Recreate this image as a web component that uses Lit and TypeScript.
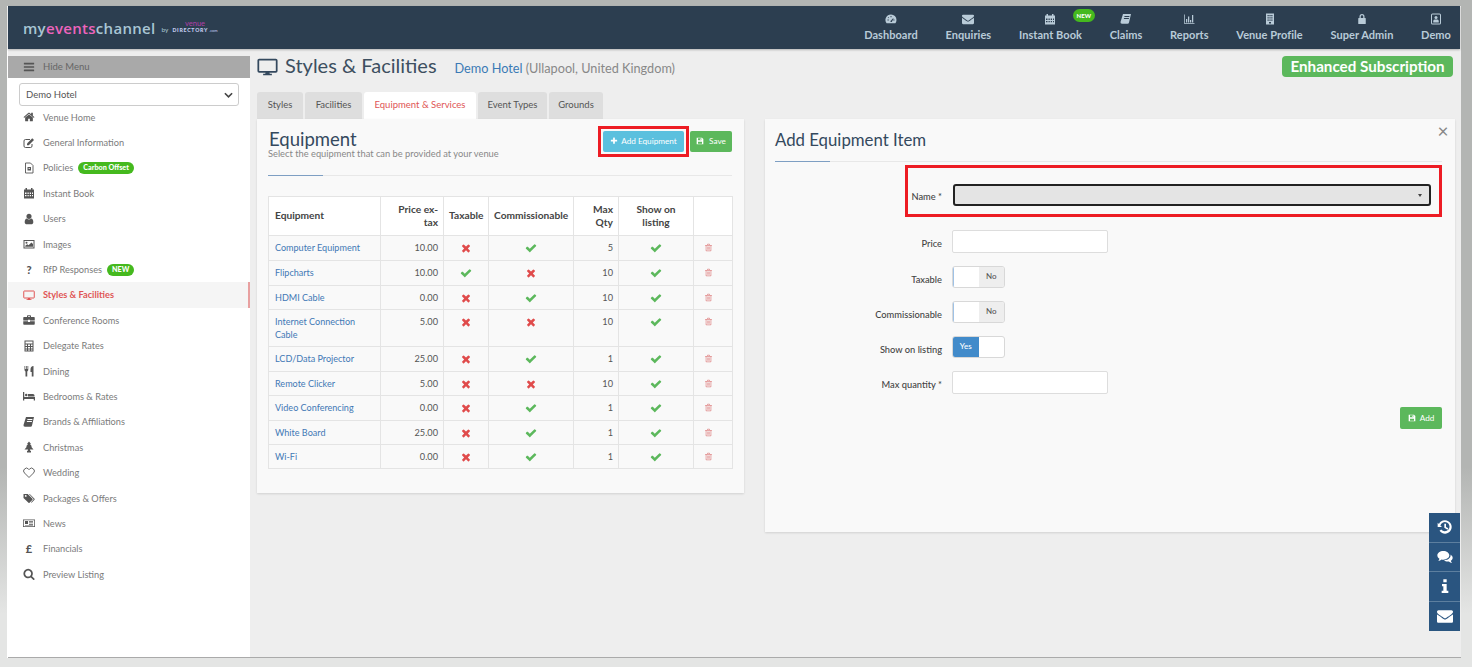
import { LitElement, html, css, svg } from "lit";
import { customElement } from "lit/decorators.js";

const fa = (d: string) => svg`<svg viewBox="0 0 1792 1792" fill="currentColor"><path d=${d}></path></svg>`;
const ic = (body: unknown) => svg`<svg viewBox="0 0 24 24" fill="currentColor">${body}</svg>`;

const ICONS: Record<string, unknown> = {
  check: fa("M1671 566q0 40-28 68l-724 724-136 136q-28 28-68 28t-68-28l-136-136-362-362q-28-28-28-68t28-68l136-136q28-28 68-28t68 28l294 295 656-657q28-28 68-28t68 28l136 136q28 28 28 68z"),
  times: fa("M1490 1322q0 40-28 68l-136 136q-28 28-68 28t-68-28l-294-294-294 294q-28 28-68 28t-68-28l-136-136q-28-28-28-68t28-68l294-294-294-294q-28-28-28-68t28-68l136-136q28-28 68-28t68 28l294 294 294-294q28-28 68-28t68 28l136 136q28 28 28 68t-28 68l-294 294 294 294q28 28 28 68z"),
  search: fa("M1216 832q0-185-131.500-316.500t-316.500-131.500-316.500 131.500-131.500 316.500 131.500 316.500 316.500 131.500 316.500-131.500 131.500-316.500zm512 832q0 52-38 90t-90 38q-54 0-90-38l-343-342q-179 124-399 124-143 0-273.500-55.500t-225-150-150-225-55.500-273.500 55.500-273.500 150-225 225-150 273.500-55.500 273.500 55.500 225 150 150 225 55.500 273.500q0 220-124 399l343 343q37 37 37 90z"),
  envelope: fa("M1792 710v794q0 66-47 113t-113 47h-1472q-66 0-113-47t-47-113v-794q44 49 101 87 362 246 497 345 57 42 92.500 65.500t94.500 48 110 24.500h2q51 0 110-24.500t94.500-48 92.500-65.500q170-123 498-345 57-39 100-87zm0-294q0 79-49 151t-122 123q-376 261-468 325-10 7-42.500 30.500t-54 38-52 32.500-57.500 27-50 9h-2q-23 0-50-9t-57.500-27-52-32.500-54-38-42.500-30.500q-91-64-262-182.500t-205-142.500q-62-42-117-115.500t-55-136.500q0-78 41.500-130t118.500-52h1472q65 0 112.500 47t47.500 113z"),
  home: fa("M1472 992v480q0 26-19 45t-45 19h-384v-384h-256v384h-384q-26 0-45-19t-19-45v-480q0-1 .5-3t.5-3l575-474 575 474q1 2 1 6zm223-69l-62 74q-8 9-21 11h-3q-13 0-21-7l-692-577-692 577q-12 8-24 7-13-2-21-11l-62-74q-8-10-7-23.500t11-21.500l719-599q32-26 76-26t76 26l244 204v-195q0-14 9-23t23-9h192q14 0 23 9t9 23v408l219 182q10 8 11 21.500t-7 23.500z"),
  user: fa("M1536 1399q0 109-62.500 187t-150.500 78h-854q-88 0-150.500-78t-62.500-187q0-85 8.500-160.500t31.500-152 58.500-131 94-89 134.500-34.500q131 128 313 128t313-128q76 0 134.500 34.500t94 89 58.500 131 31.500 152 8.500 160.500zm-256-887q0 159-112.500 271.500t-271.500 112.500-271.500-112.500-112.500-271.500 112.500-271.500 271.500-112.500 271.500 112.500 112.500 271.500z"),
  bars: fa("M1664 1344v128q0 26-19 45t-45 19h-1408q-26 0-45-19t-19-45v-128q0-26 19-45t45-19h1408q26 0 45 19t19 45zm0-512v128q0 26-19 45t-45 19h-1408q-26 0-45-19t-19-45v-128q0-26 19-45t45-19h1408q26 0 45 19t19 45zm0-512v128q0 26-19 45t-45 19h-1408q-26 0-45-19t-19-45v-128q0-26 19-45t45-19h1408q26 0 45 19t19 45z"),
  plus: fa("M1600 736v192q0 40-28 68t-68 28h-416v416q0 40-28 68t-68 28h-192q-40 0-68-28t-28-68v-416h-416q-40 0-68-28t-28-68v-192q0-40 28-68t68-28h416v-416q0-40 28-68t68-28h192q40 0 68 28t28 68v416h416q40 0 68 28t28 68z"),
  desktop: ic(svg`<path fill="none" stroke="currentColor" stroke-width="2" stroke-linejoin="round" d="M2.5 4h19a1 1 0 0 1 1 1v12a1 1 0 0 1-1 1h-19a1 1 0 0 1-1-1V5a1 1 0 0 1 1-1z"/><path d="M10 18h4l.6 2.4H17V22H7v-1.600h2.400z"/>`),
  edit: ic(svg`<path fill="none" stroke="currentColor" stroke-width="2" d="M18 14v4a3 3 0 0 1-3 3H5a3 3 0 0 1-3-3V8a3 3 0 0 1 3-3h9"/><path d="M8 13L18.500 2.500l3.500 3.500L11.500 16.500H8z"/>`),
  file: ic(svg`<path fill="none" stroke="currentColor" stroke-width="1.800" d="M5 2h10l5 5v15H5z"/><path d="M9 10h7v7H9zm2 2v1.500h3V12z"/>`),
  calendar: ic(svg`<path fill-rule="evenodd" d="M2 5h3V2h3v3h8V2h3v3h3v18H2zm2 6v3h3v-3zm5 0v3h2.500v-3zm4.500 0v3H16v-3zm4.500 0v3h2v-3zM4 16v2.500h3V16zm5 0v2.500h2.500V16zm4.500 0v2.500H16V16zm4.500 0v2.500h2V16z"/>`),
  image: ic(svg`<path fill-rule="evenodd" d="M1 4h22v17H1zm2 2v13h18V6z"/><circle cx="7" cy="9.500" r="2"/><path d="M4.500 17.500v-2l4-3 2.500 2 6-5.500 3 3v5.500z"/>`),
  monitor: ic(svg`<path fill="none" stroke="currentColor" stroke-width="2" d="M2.500 4h19a1 1 0 0 1 1 1v12a1 1 0 0 1-1 1h-19a1 1 0 0 1-1-1V5a1 1 0 0 1 1-1z"/><path d="M10 18h4l.6 2.400H17V22H7v-1.600h2.400z"/>`),
  briefcase: ic(svg`<path fill-rule="evenodd" d="M8 6V4a1.500 1.500 0 0 1 1.500-1.500h5A1.500 1.500 0 0 1 16 4v2h6a1.500 1.500 0 0 1 1.500 1.500V13H14v-1.500h-4V13H.5V7.500A1.500 1.500 0 0 1 2 6zm2-1.500V6h4V4.500z"/><path d="M.5 14.500H10V16h4v-1.500h9.500V20a1.500 1.500 0 0 1-1.500 1.500H2A1.500 1.500 0 0 1 .5 20z"/>`),
  calc: ic(svg`<path fill-rule="evenodd" d="M3 1h18v22H3zm2 2v4h14V3zm0 6v3h3V9zm5 0v3h4V9zm6 0v3h3V9zm-11 5v3h3v-3zm5 0v3h4v-3zm6 0v3h3v-3zM5 19v2h3v-2zm5 0v2h4v-2zm6 0v2h3v-2z"/>`),
  cutlery: ic(svg`<path d="M3 2h1.500v6H6V2h1.500v6H9V2h1.500v8a3 3 0 0 1-2 2.800V23H5V12.800A3 3 0 0 1 3 10zM15 9c0-4 2-7 6-7v21h-3.500v-9H15z"/>`),
  bed: ic(svg`<path d="M0 4h2.500v10H24v7h-2.500v-3h-19v3H0z"/><circle cx="6.500" cy="10" r="2.500"/><path d="M10 8h10a3 3 0 0 1 3 3v2H10z"/>`),
  book: ic(svg`<path fill-rule="evenodd" d="M6 2h16l-4 17a3 3 0 0 1-3 2.500H4a3 3 0 0 1-3-3.500zm3 4l-.4 2h10l.4-2zm-1 4l-.4 2h10l.4-2z"/>`),
  tree: ic(svg`<path d="M12 1l4 5h-2l4 5h-2l5 6h-7v2.500h2V23H8v-3.500h2V17H3l5-6H6l4-5H8z"/>`),
  heart: ic(svg`<path fill="none" stroke="currentColor" stroke-width="1.800" stroke-linejoin="round" d="M12 21L3 12a5.500 5.500 0 0 1 0-8 5.500 5.500 0 0 1 8 0l1 1 1-1a5.500 5.500 0 0 1 8 0 5.500 5.500 0 0 1 0 8z"/>`),
  tags: ic(svg`<path fill-rule="evenodd" d="M1 4h8.500L19 13.500a1.500 1.500 0 0 1 0 2l-6 6a1.500 1.500 0 0 1-2 0L1 12zm4.500 2a1.800 1.800 0 1 0 0 3.600 1.800 1.800 0 0 0 0-3.600z"/><path d="M12 4h1.500L23 13.500a1.500 1.500 0 0 1 0 2l-6 6-1-1 5.500-6z"/>`),
  news: ic(svg`<path fill-rule="evenodd" d="M0 5h24v15H0zm1.500 1.500v12h21v-12z"/><path d="M4 8h6v6H4zM12 8h8v1.500h-8zM12 11h8v1.500h-8zM12 14h8v1.500h-8zM4 16h16v1H4z"/>`),
  dashboard: ic(svg`<path fill-rule="evenodd" d="M12 3a11 11 0 0 1 11 11c0 2.500-.8 4.800-2.200 6.700H3.200A11 11 0 0 1 12 3zM5 13v2h2.500v-2zm5.800 3.500a1.800 1.800 0 0 0 2.800 1.400l3.500-6.900-1-.5-4 4.500a1.800 1.800 0 0 0-1.300 1.500zM11 6v2.500h2V6zM6.500 8l-1 1 1.500 1.500 1-1zm10 5v2H19v-2z"/>`),
  chart: ic(svg`<path d="M2 3h1.500v17H23v1.500H2z"/><path d="M6 12h2.500v7H6zM10 7h2.500v12H10zM14 14h2.500v5H14zM18 4h2.500v15H18z"/>`),
  building: ic(svg`<path fill-rule="evenodd" d="M4 1h16v22H4zm3 3v2.500h2.500V4zm3.800 0v2.500h2.500V4zm3.700 0v2.500H17V4zM7 8.500V11h2.500V8.500zm3.800 0V11h2.500V8.500zm3.700 0V11H17V8.500zM7 13v2.500h2.500V13zm3.800 0v2.500h2.500V13zm3.700 0v2.500H17V13zM10 18v3h4v-3z"/>`),
  lock: ic(svg`<path fill-rule="evenodd" d="M7 10V7a5 5 0 0 1 10 0v3h1.500a1 1 0 0 1 1 1v10a1 1 0 0 1-1 1h-13a1 1 0 0 1-1-1V11a1 1 0 0 1 1-1zm2.500 0h5V7a2.500 2.500 0 0 0-5 0z"/>`),
  portrait: ic(svg`<path fill-rule="evenodd" d="M5 1h14a3 3 0 0 1 3 3v16a3 3 0 0 1-3 3H5a3 3 0 0 1-3-3V4a3 3 0 0 1 3-3zm0 2a1 1 0 0 0-1 1v16a1 1 0 0 0 1 1h14a1 1 0 0 0 1-1V4a1 1 0 0 0-1-1z"/><circle cx="12" cy="9" r="3"/><path d="M6.500 19v-3a3 3 0 0 1 3-3h5a3 3 0 0 1 3 3v3z"/>`),
  trash: ic(svg`<path fill-rule="evenodd" d="M8.500 5V3.500A1.500 1.500 0 0 1 10 2h4a1.500 1.500 0 0 1 1.500 1.500V5H21v2h-1.500v13a2 2 0 0 1-2 2h-11a2 2 0 0 1-2-2V7H3V5zm2-1v1h3V4zM6.500 7v13h11V7zm2 2h1.500v9H8.500zm2.800 0h1.500v9h-1.500zm2.700 0h1.500v9H14z"/>`),
  save: ic(svg`<path fill-rule="evenodd" d="M2 2h16l4 4v16H2zm4 2v6h10V4zm7 1h2v4h-2zM6 14v6h12v-6z"/>`),
  history: ic(svg`<path d="M12 2a10 10 0 1 1-8.200 15.700l2.500-1.800A7 7 0 1 0 5 9.600L7.500 12H1V5.500l1.900 1.900A10 10 0 0 1 12 2z"/><path d="M11 7h2.500v5l3.500 2-1.200 2-4.800-2.800z"/>`),
  comments: ic(svg`<path d="M9.500 3c5 0 9 2.900 9 6.500S14.500 16 9.500 16c-.9 0-1.800-.1-2.600-.3C5.500 17 3.800 17.800 2 18c.9-1 1.500-2 1.700-3.200C1.600 13.600.500 11.700.500 9.500.500 5.900 4.500 3 9.500 3z"/><path d="M20 8.300c2.100 1.100 3.500 2.900 3.500 5 0 1.800-1.100 3.500-2.800 4.500.2 1 .8 2 1.800 3.200-1.900-.2-3.500-1-4.700-2.400-.6.100-1.200.2-1.800.2-2.200 0-4.200-.7-5.600-1.900 5.500.2 10-3 10-7.400 0-.4 0-.9-.4-1.200z"/>`),
  info: ic(svg`<path d="M9.500 2h5v4.500h-5zM7.500 9h7v10h2.500v3.500H7V19h2.500v-6.500h-2z"/>`),
};
const icon = (n: string) => ICONS[n];

const HEADER = [
  ["dashboard", "Dashboard"], ["envelope", "Enquiries"], ["calendar", "Instant Book", "NEW"], ["book", "Claims"],
  ["chart", "Reports"], ["building", "Venue Profile"], ["lock", "Super Admin"], ["portrait", "Demo"],
];
const MENU: [string, string, string?][] = [
  ["home", "Venue Home"], ["edit", "General Information"], ["file", "Policies", "Carbon Offset"], ["calendar", "Instant Book"],
  ["user", "Users"], ["image", "Images"], ["?", "RfP Responses", "NEW"], ["monitor", "Styles & Facilities"],
  ["briefcase", "Conference Rooms"], ["calc", "Delegate Rates"], ["cutlery", "Dining"], ["bed", "Bedrooms & Rates"],
  ["book", "Brands & Affiliations"], ["tree", "Christmas"], ["heart", "Wedding"], ["tags", "Packages & Offers"],
  ["news", "News"], ["£", "Financials"], ["search", "Preview Listing"],
];
const ROWS: [string, string, boolean, boolean, string, number][] = [
  ["Computer Equipment", "10.00", false, true, "5", 25],
  ["Flipcharts", "10.00", true, false, "10", 25],
  ["HDMI Cable", "0.00", false, true, "10", 24],
  ["Internet Connection Cable", "5.00", false, false, "10", 37],
  ["LCD/Data Projector", "25.00", false, true, "1", 25],
  ["Remote Clicker", "5.00", false, false, "10", 24],
  ["Video Conferencing", "0.00", false, true, "1", 25],
  ["White Board", "25.00", false, true, "1", 24],
  ["Wi-Fi", "0.00", false, true, "1", 24],
];

@customElement("app-root")
export class AppRoot extends LitElement {
  static styles = css`
    :host { display: block; height: 667px; overflow: hidden; font-family: "Lato", "Noto Sans", sans-serif; color: #555; }
    * { box-sizing: border-box; }
    svg { display: block; width: 100%; height: 100%; }
    .shell { height: 667px; padding: 6px 11px 9px 8px; background: linear-gradient(#b3b5b3 0 70%, #e4e5e4 92%); }
    .frame { height: 652px; background: #eee; display: flex; flex-direction: column; border-bottom: 1px solid #aaa; position: relative; box-shadow: -1px 0 0 #fff; }

    header { height: 43px; flex: none; margin-right: 1px; background: #2c3e50; display: flex; align-items: center; justify-content: space-between; padding: 0 9px 0 15px; box-shadow: 0 1px 2px rgba(0,0,0,.25); }
    .logo { display: flex; align-items: center; color: #a9c6d4; }
    .logo-main { font-size: 15px; letter-spacing: .3px; font-family: "Open Sans", sans-serif; font-weight: 600; }
    .logo-main b { font-weight: 600; color: #ee64bd; }
    .logo-by { font-size: 6.500px; margin: 4px 4px 0 6px; }
    .logo-dir { display: flex; flex-direction: column; align-items: center; line-height: 1; margin-top: -1px; }
    .logo-venue { font-size: 7.500px; color: #b23fa8; line-height: 7px; }
    .logo-d { font-size: 5.200px; font-weight: 900; letter-spacing: .75px; color: #c4cdf0; line-height: 6px; }
    .logo-d i { font-style: normal; font-weight: 400; font-size: 4px; letter-spacing: 0; margin-left: 1px; }
    .topnav { display: flex; gap: 27.700px; height: 100%; }
    .topitem { position: relative; display: flex; flex-direction: column; align-items: center; justify-content: flex-end; padding-bottom: 8px; color: #b9cbd8; font-size: 11px; font-weight: 700; line-height: 13px; letter-spacing: .05px; }
    .topitem .ti { width: 12px; height: 12px; margin-bottom: 3px; }
    .topnew { position: absolute; top: 3px; left: 54px; width: 22px; height: 13px; border-radius: 7px; background: #45b91e; color: #fff; font-size: 6px; font-weight: 900; display: flex; align-items: center; justify-content: center; }

    .body { flex: 1; display: flex; padding-top: 7px; min-height: 0; }
    aside { width: 242px; flex: none; background: #fff; }
    .hide { height: 22px; background: #a9a9a9; display: flex; align-items: center; padding: 0 0 2px 15px; color: #666; font-size: 9.500px; gap: 8px; }
    .hide .mi { width: 12px; height: 12px; color: #555; margin-top: 2px; }
    .venue-sel { margin: 5px 11px 0; height: 23px; border: 1px solid #ccc; border-radius: 3px; background: #fff; display: flex; align-items: center; justify-content: space-between; padding: 0 5px 0 6px; color: #555; font-size: 9.500px; }
    .venue-sel svg { width: 9px; height: 6px; }
    ul { list-style: none; margin: -1.500px 0 0; padding: 0; }
    li { height: 25.400px; display: flex; align-items: center; padding-left: 14px; color: #7b7b7b; font-size: 9.200px; }
    li .mi { width: 14px; height: 12px; flex: none; color: #555; margin-right: 7px; display: flex; align-items: center; justify-content: center; font-size: 11px; font-weight: 900; }
    li.active { background: #f5f5f5; color: #e05555; font-weight: 700; box-shadow: inset -2px 0 0 #e8a0a0; }
    li.active .mi { color: #e05555; }
    .pill { margin-left: 5px; background: #45b91e; color: #fff; font-size: 7.200px; font-weight: 900; border-radius: 7px; height: 12px; padding: 0 5px; display: flex; align-items: center; }

    main { flex: 1; min-width: 0; padding-left: 7px; }
    .titlebar { height: 36px; display: flex; align-items: flex-start; padding-right: 8px; }
    .titlebar .big { width: 21px; height: 21px; color: #34495e; margin-right: 7px; }
    h1 { margin: -1px 0 0; font-size: 20px; font-weight: 400; color: #3d4f60; line-height: 21px; }
    .hotel { margin: 5px 0 0 18px; font-size: 12.700px; color: #888; line-height: 14px; }
    .hotel a { color: #3b7ab5; }
    .sub-badge { margin-left: auto; background: #5cb85c; color: #fff; font-weight: 700; font-size: 15.200px; border-radius: 4px; height: 21px; width: 171px; padding-bottom: 2px; display: flex; align-items: center; justify-content: center; }

    .tabs { display: flex; height: 27px; gap: 2px; }
    .tab { background: #dedede; color: #555; font-size: 9.500px; display: flex; align-items: center; justify-content: center; border-radius: 3px 3px 0 0; padding-bottom: 2px; }
    .tab.on { background: #fff; color: #e05555; }

    .panels { display: grid; grid-template-columns: 487px 690px; column-gap: 21px; align-items: start; }
    .panel { background: #f9f9f9; box-shadow: 0 1px 2px rgba(0,0,0,.12); position: relative; }
    .left { height: 374px; padding: 11px 12px 0 11px; }
    .right { height: 413px; padding: 9px 13px 0 10px; }
    .phead { display: flex; justify-content: space-between; align-items: flex-start; height: 45px; }
    h2 { margin: 0 0 0 1px; font-size: 18.500px; font-weight: 400; color: #34495e; line-height: 19px; }
    .hint { font-size: 9.300px; color: #888; line-height: 10px; }
    .btns { display: flex; gap: 6px; margin-top: 1px; }
    .btn { position: relative; height: 21px; border-radius: 2px; color: #fff; font-size: 8.200px; display: flex; align-items: center; justify-content: center; gap: 3px; background: #5cb85c; }
    .btn .bi { width: 8px; height: 8px; }
    .btn.info { width: 81px; background: #5bc0de; padding-bottom: 1px; }
    .btn.save { width: 42px; gap: 5px; padding-bottom: 1px; }
    .btn.add { width: 42px; height: 22px; gap: 4px; margin: 0 0 0 auto; }
    .mark { position: absolute; border: 3px solid #ed1c24; pointer-events: none; }
    .btn .mark { inset: -5px; }
    .rule { height: 1px; background: linear-gradient(90deg, #7e9fc3 0 55px, #e8e8e8 55px); }
    .left .rule { margin-bottom: 20px; }

    table { width: 464px; border-collapse: collapse; table-layout: fixed; font-size: 9.050px; }
    th, td { border: 1px solid #e4e4e4; padding: 0 5px; }
    th.l, td:first-child { padding-left: 6px; }
    th { height: 39px; background: #fff; color: #444; font-weight: 700; font-size: 10.200px; line-height: 13.500px; text-align: center; }
    td { color: #555; vertical-align: top; padding-top: 5px; line-height: 13px; background: #f9f9f9; }
    th.l { text-align: left; } th.r, td.r { text-align: right; }
    td.r { font-size: 9.200px; }
    td a { color: #3f78b5; }
    td .st { width: 12px; height: 12px; margin: 1px auto 0; }
    td .st.ok { color: #5cb85c; } td .st.no { color: #e04b4b; }
    td .tr { width: 9px; height: 9px; margin: 2px 0 0 5px; color: #e08a8a; }

    .rhead { height: 33px; }
    .rhead h3 { margin: 0; padding-top: 1px; font-size: 16.800px; font-weight: 400; color: #34495e; line-height: 22px; }
    .close { position: absolute; top: 6px; right: 6px; width: 12px; height: 12px; font-size: 19px; line-height: 12px; color: #888; text-align: center; }
    form { display: flex; flex-direction: column; gap: 13px; padding-top: 22px; }
    .row { position: relative; display: grid; grid-template-columns: 167px auto; column-gap: 10px; align-items: center; font-size: 9.300px; color: #444; font-weight: 500; }
    .row label { text-align: right; padding-top: 4px; }
    .row.name label { padding-top: 2px; }
    .row .mark { left: 130px; right: 0; top: -19px; bottom: -11px; }
    .row.name { margin-bottom: 11px; }
    .nsel { height: 22px; width: 478px; background: #e4e4e4; border: 2px solid #222; border-radius: 3px; display: flex; align-items: center; justify-content: flex-end; padding-right: 7px; margin-left: 1px; }
    .nsel i { border: 2.500px solid transparent; border-top: 3px solid #444; border-bottom: 0; }
    .inp { width: 156px; height: 23px; background: #fff; border: 1px solid #ddd; border-radius: 2px; }
    .tgl { width: 53px; height: 22px; background: #fff; border: 1px solid #d8d8d8; border-radius: 3px; display: grid; grid-template-columns: 1fr 1fr; overflow: hidden; font-size: 8px; }
    .tgl span { display: flex; align-items: center; justify-content: center; padding-bottom: 2px; }
    .tgl .off { background: #eee; color: #555; }
    .tgl .yes { background: #428bca; color: #fff; }
    .tgl .blank.edge { box-shadow: inset 1px 0 0 #9fc2e6; }

    .side { position: absolute; right: 1px; top: 507px; width: 31px; display: flex; flex-direction: column; }
    .side div { height: 29.500px; background: #2a5580; color: #fff; display: flex; align-items: center; justify-content: center; border-bottom: 1px solid #5d7f9f; }
    .side div:last-child { border-bottom: 0; }
    .side span { width: 16px; height: 16px; }
  `;

  render() {
    return html`<div class="shell"><div class="frame">
      <header>
        <div class="logo">
          <span class="logo-main">my<b>events</b>channel</span>
          <span class="logo-by">by</span>
          <span class="logo-dir"><span class="logo-venue">venue</span><span class="logo-d">DIRECTORY<i>.com</i></span></span>
        </div>
        <nav class="topnav">
          ${HEADER.map(([i, t, n]) => html`<div class="topitem"><span class="ti">${icon(i)}</span>${t}${n ? html`<span class="topnew">${n}</span>` : ""}</div>`)}
        </nav>
      </header>
      <div class="body">
        <aside>
          <div class="hide"><span class="mi">${icon("bars")}</span>Hide Menu</div>
          <div class="venue-sel">Demo Hotel
            <svg viewBox="0 0 10 6"><path d="M1 1l4 4 4-4" fill="none" stroke="#444" stroke-width="1.800"/></svg>
          </div>
          <ul>
            ${MENU.map(([i, t, p]) => html`<li class=${t === "Styles & Facilities" ? "active" : ""}>
              <span class="mi">${ICONS[i] ? icon(i) : i}</span>${t}${p ? html`<span class="pill">${p}</span>` : ""}
            </li>`)}
          </ul>
        </aside>
        <main>
          <div class="titlebar">
            <span class="big">${icon("desktop")}</span>
            <h1>Styles &amp; Facilities</h1>
            <div class="hotel"><a>Demo Hotel</a> (Ullapool, United Kingdom)</div>
            <div class="sub-badge">Enhanced Subscription</div>
          </div>
          <div class="tabs">
            ${[["Styles", 46], ["Facilities", 57], ["Equipment & Services", 112], ["Event Types", 69], ["Grounds", 54]].map(
              ([t, w]) => html`<div class="tab ${t === "Equipment & Services" ? "on" : ""}" style="width:${w}px">${t}</div>`
            )}
          </div>
          <div class="panels">
            <section class="panel left">
              <div class="phead">
                <div><h2>Equipment</h2><div class="hint">Select the equipment that can be provided at your venue</div></div>
                <div class="btns">
                  <div class="btn info"><span class="bi">${icon("plus")}</span>Add Equipment<span class="mark"></span></div>
                  <div class="btn save"><span class="bi">${icon("save")}</span>Save</div>
                </div>
              </div>
              <div class="rule"></div>
              <table>
                <colgroup><col style="width:112px"/><col style="width:63px"/><col style="width:45px"/><col style="width:85px"/><col style="width:45px"/><col style="width:75px"/><col style="width:39px"/></colgroup>
                <thead><tr>
                  <th class="l">Equipment</th><th class="r">Price ex-tax</th><th>Taxable</th><th>Commissionable</th><th class="r">Max Qty</th><th>Show on listing</th><th></th>
                </tr></thead>
                <tbody>
                  ${ROWS.map(([n, p, t, c, q, h]) => html`<tr style="height:${h}px">
                    <td><a>${n}</a></td><td class="r">${p}</td>
                    <td><div class="st ${t ? "ok" : "no"}">${icon(t ? "check" : "times")}</div></td>
                    <td><div class="st ${c ? "ok" : "no"}">${icon(c ? "check" : "times")}</div></td>
                    <td class="r">${q}</td>
                    <td><div class="st ok">${icon("check")}</div></td>
                    <td><div class="tr">${icon("trash")}</div></td>
                  </tr>`)}
                </tbody>
              </table>
            </section>
            <section class="panel right">
              <div class="close">×</div>
              <div class="rhead"><h3>Add Equipment Item</h3></div>
              <div class="rule"></div>
              <form>
                <div class="row name"><label>Name *</label><div class="nsel"><i></i></div><span class="mark"></span></div>
                <div class="row"><label>Price</label><div class="inp"></div></div>
                ${["Taxable", "Commissionable"].map((l) => html`<div class="row"><label>${l}</label><div class="tgl"><span class="blank edge"></span><span class="off">No</span></div></div>`)}
                <div class="row"><label>Show on listing</label><div class="tgl"><span class="yes">Yes</span><span class="blank"></span></div></div>
                <div class="row"><label>Max quantity *</label><div class="inp"></div></div>
                <div class="btn add"><span class="bi">${icon("save")}</span>Add</div>
              </form>
            </section>
          </div>
        </main>
      </div>
      <div class="side">
        ${["history", "comments", "info", "envelope"].map((i) => html`<div><span>${icon(i)}</span></div>`)}
      </div>
    </div></div>`;
  }
}
